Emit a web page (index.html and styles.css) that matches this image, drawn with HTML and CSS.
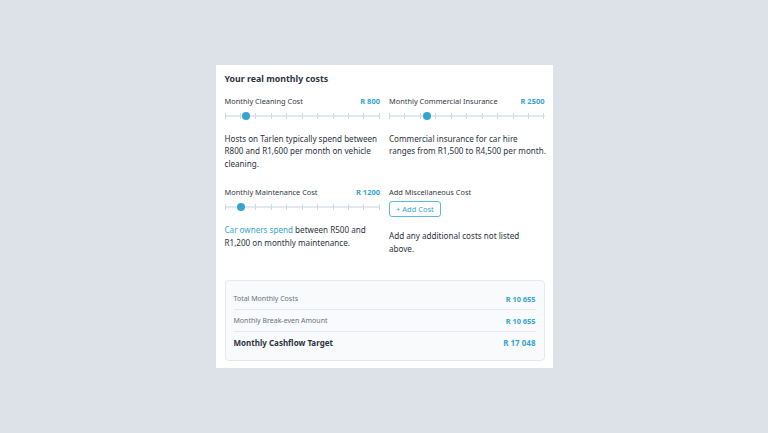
FILE: index.html
```html
<!DOCTYPE html>
<html lang="en">
<head>
  <meta charset="UTF-8">
  <meta name="viewport" content="width=device-width, initial-scale=1.0">
  <title>Your real monthly costs</title>
  <link rel="stylesheet" href="styles.css">
</head>
<body>
  <div class="card">
    <h2 class="title">Your real monthly costs</h2>
    <div class="grid">
      <div class="field">
        <div class="field-head">
          <span class="label">Monthly Cleaning Cost</span>
          <span class="value">R 800</span>
        </div>
        <div class="slider">
          <div class="ticks">
            <i></i><i></i><i></i><i></i><i></i><i></i><i></i><i></i><i></i><i></i><i></i>
          </div>
          <span class="thumb" style="left: 14%"></span>
        </div>
        <p class="note">Hosts on Tarlen typically spend between<br>R800 and R1,600 per month on vehicle<br>cleaning.</p>
      </div>

      <div class="field">
        <div class="field-head">
          <span class="label">Monthly Commercial Insurance</span>
          <span class="value">R 2500</span>
        </div>
        <div class="slider">
          <div class="ticks">
            <i></i><i></i><i></i><i></i><i></i><i></i><i></i><i></i><i></i><i></i><i></i>
          </div>
          <span class="thumb" style="left: 24.5%"></span>
        </div>
        <p class="note">Commercial insurance for car hire<br>ranges from R1,500 to R4,500 per month.</p>
      </div>

      <div class="field">
        <div class="field-head">
          <span class="label">Monthly Maintenance Cost</span>
          <span class="value">R 1200</span>
        </div>
        <div class="slider">
          <div class="ticks">
            <i></i><i></i><i></i><i></i><i></i><i></i><i></i><i></i><i></i><i></i><i></i>
          </div>
          <span class="thumb" style="left: 10.5%"></span>
        </div>
        <p class="note"><span class="link">Car owners spend</span> between R500 and<br>R1,200 on monthly maintenance.</p>
      </div>

      <div class="field">
        <div class="field-head">
          <span class="label">Add Miscellaneous Cost</span>
        </div>
        <button class="add-btn">+ Add Cost</button>
        <p class="note note-misc">Add any additional costs not listed<br>above.</p>
      </div>
    </div>

    <div class="summary">
      <div class="summary-row">
        <span>Total Monthly Costs</span>
        <span class="amount">R 10 655</span>
      </div>
      <div class="summary-row">
        <span>Monthly Break-even Amount</span>
        <span class="amount">R 10 655</span>
      </div>
      <div class="summary-row total">
        <span>Monthly Cashflow Target</span>
        <span class="amount">R 17 048</span>
      </div>
    </div>
  </div>
</body>
</html>
```

FILE: styles.css
```css
body {
  margin: 0;
  height: 100vh;
  display: flex;
  align-items: center;
  justify-content: center;
  background-color: #dde1e8;
  font-family: "Noto Sans", "Open Sans", sans-serif;
  color: #2d3340;
}
.card {
  width: 337px;
  box-sizing: border-box;
  background: #fff;
  padding: 8px 8px 7px 9px;
}
.title {
  margin: 0 0 9px;
  font-size: 8.8px;
  line-height: 13px;
  font-weight: 700;
  color: #2d3340;
}
.grid {
  display: grid;
  grid-template-columns: minmax(0, 1fr) minmax(0, 1fr);
  column-gap: 9px;
  row-gap: 16px;
}
.field-head {
  display: flex;
  justify-content: space-between;
  align-items: center;
  height: 12px;
}
.label {
  font-size: 7.4px;
  color: #333a44;
}
.value {
  font-size: 7.5px;
  font-weight: 700;
  color: #36a4cf;
}
.slider {
  position: relative;
  height: 12px;
  margin-top: 3px;
}
.ticks {
  height: 100%;
  display: flex;
  justify-content: space-between;
  align-items: center;
  background: linear-gradient(#e2e8f0, #e2e8f0) center / 100% 2px no-repeat;
}
.ticks i {
  width: 1px;
  height: 6px;
  background: #d3d9e1;
}
.thumb {
  position: absolute;
  top: 50%;
  width: 8px;
  height: 8px;
  margin: -4px 0 0 -4px;
  border-radius: 50%;
  background: #36a4cf;
}
.note {
  margin: 11px 0 0;
  font-size: 8.1px;
  line-height: 12.5px;
  white-space: nowrap;
  color: #2d3340;
}
.note-misc {
  margin-top: 13px;
}
.link {
  color: #36a4cf;
}
.add-btn {
  display: block;
  margin-top: 3px;
  padding: 0 6px;
  height: 16px;
  border: 1px solid #5fb8da;
  border-radius: 3px;
  background: #fff;
  color: #36a4cf;
  font-family: inherit;
  font-size: 7.5px;
}
.summary {
  margin-top: 25px;
  padding: 7px 8px 7px;
  border: 1px solid #e5e9ef;
  border-radius: 4px;
  background: #f8fafc;
}
.summary-row {
  display: flex;
  justify-content: space-between;
  align-items: center;
  height: 21px;
  border-bottom: 1px solid #e5e9ef;
  font-size: 7px;
  color: #6b7280;
}
.summary-row:last-child {
  border-bottom: none;
}
.amount {
  font-weight: 700;
  font-size: 7.4px;
  color: #36a4cf;
}
.total {
  font-size: 8px;
  font-weight: 700;
  color: #2d3340;
}
.total .amount {
  font-size: 8px;
}
```
